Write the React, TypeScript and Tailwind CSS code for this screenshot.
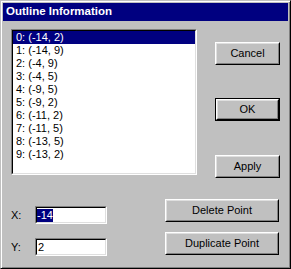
import React from "react";

const points: [number, number][] = [
  [-14, 2],
  [-14, 9],
  [-4, 9],
  [-4, 5],
  [-9, 5],
  [-9, 2],
  [-11, 2],
  [-11, 5],
  [-13, 5],
  [-13, 2],
];

const Button: React.FC<{ label: string; className?: string; isDefault?: boolean }> = ({
  label,
  className = "",
  isDefault,
}) => {
  const raised = (
    <div className="h-full w-full border border-t-white border-l-white border-r-black border-b-black">
      <div className="h-full w-full border border-t-[#dfdfdf] border-l-[#dfdfdf] border-r-[#808080] border-b-[#808080] flex items-center justify-center text-[11px] text-black">
        {label}
      </div>
    </div>
  );
  if (isDefault) {
    return <div className={`border border-black ${className}`}>{raised}</div>;
  }
  return <div className={className}>{raised}</div>;
};

const Sunken: React.FC<{ className?: string; children?: React.ReactNode }> = ({
  className = "",
  children,
}) => (
  <div
    className={`border border-t-[#808080] border-l-[#808080] border-r-white border-b-white ${className}`}
  >
    <div className="h-full w-full border border-t-black border-l-black border-r-[#dfdfdf] border-b-[#dfdfdf] bg-white">
      {children}
    </div>
  </div>
);

export default function App() {
  return (
    <div className="w-[291px] h-[269px] bg-[#c0c0c0] border border-t-[#c0c0c0] border-l-[#c0c0c0] border-r-black border-b-black shadow-[inset_1px_1px_#fff,inset_-1px_-1px_#808080] p-[2px] flex flex-col font-['Liberation_Sans',sans-serif] text-black">
      <div className="h-[18px] bg-[#000080] text-white font-bold text-[11.5px] pl-[3px] flex items-center">
        Outline Information
      </div>

      <div className="pl-[8px] pt-[8px]">
        <div className="flex">
          <Sunken className="w-[186px] h-[146px]">
            <div className="flex flex-col">
              {points.map(([x, y], i) => (
                <div
                  key={i}
                  className={`h-[13px] leading-[13px] pl-[3px] text-[11px] whitespace-pre ${
                    i === 0 ? "bg-[#000080] text-white" : ""
                  }`}
                >
                  {`${i}: (${x}, ${y})`}
                </div>
              ))}
            </div>
          </Sunken>

          <div className="ml-[18px] pt-[13px] flex flex-col">
            <Button label="Cancel" className="w-[65px] h-[23px]" />
            <Button label="OK" isDefault className="w-[65px] h-[23px] mt-[33px]" />
            <Button label="Apply" className="w-[65px] h-[23px] mt-[34px]" />
          </div>
        </div>

        <div className="flex mt-[21px]">
          <div className="w-[154px] pt-[7px] flex flex-col">
            <div className="flex items-center h-[18px]">
              <span className="w-[24px] text-[11px]">X:</span>
              <Sunken className="w-[72px] h-[18px]">
                <div className="h-full flex items-center pl-[0px] text-[11px]">
                  <span className="bg-[#000080] text-white leading-[13px]">-14</span>
                </div>
              </Sunken>
            </div>
            <div className="flex items-center h-[18px] mt-[14px]">
              <span className="w-[24px] text-[11px]">Y:</span>
              <Sunken className="w-[72px] h-[18px]">
                <div className="h-full flex items-center pl-[1px] text-[11px]">2</div>
              </Sunken>
            </div>
          </div>

          <div className="flex flex-col">
            <Button label="Delete Point" className="w-[114px] h-[23px]" />
            <Button label="Duplicate Point" className="w-[114px] h-[23px] mt-[10px]" />
          </div>
        </div>
      </div>
    </div>
  );
}
